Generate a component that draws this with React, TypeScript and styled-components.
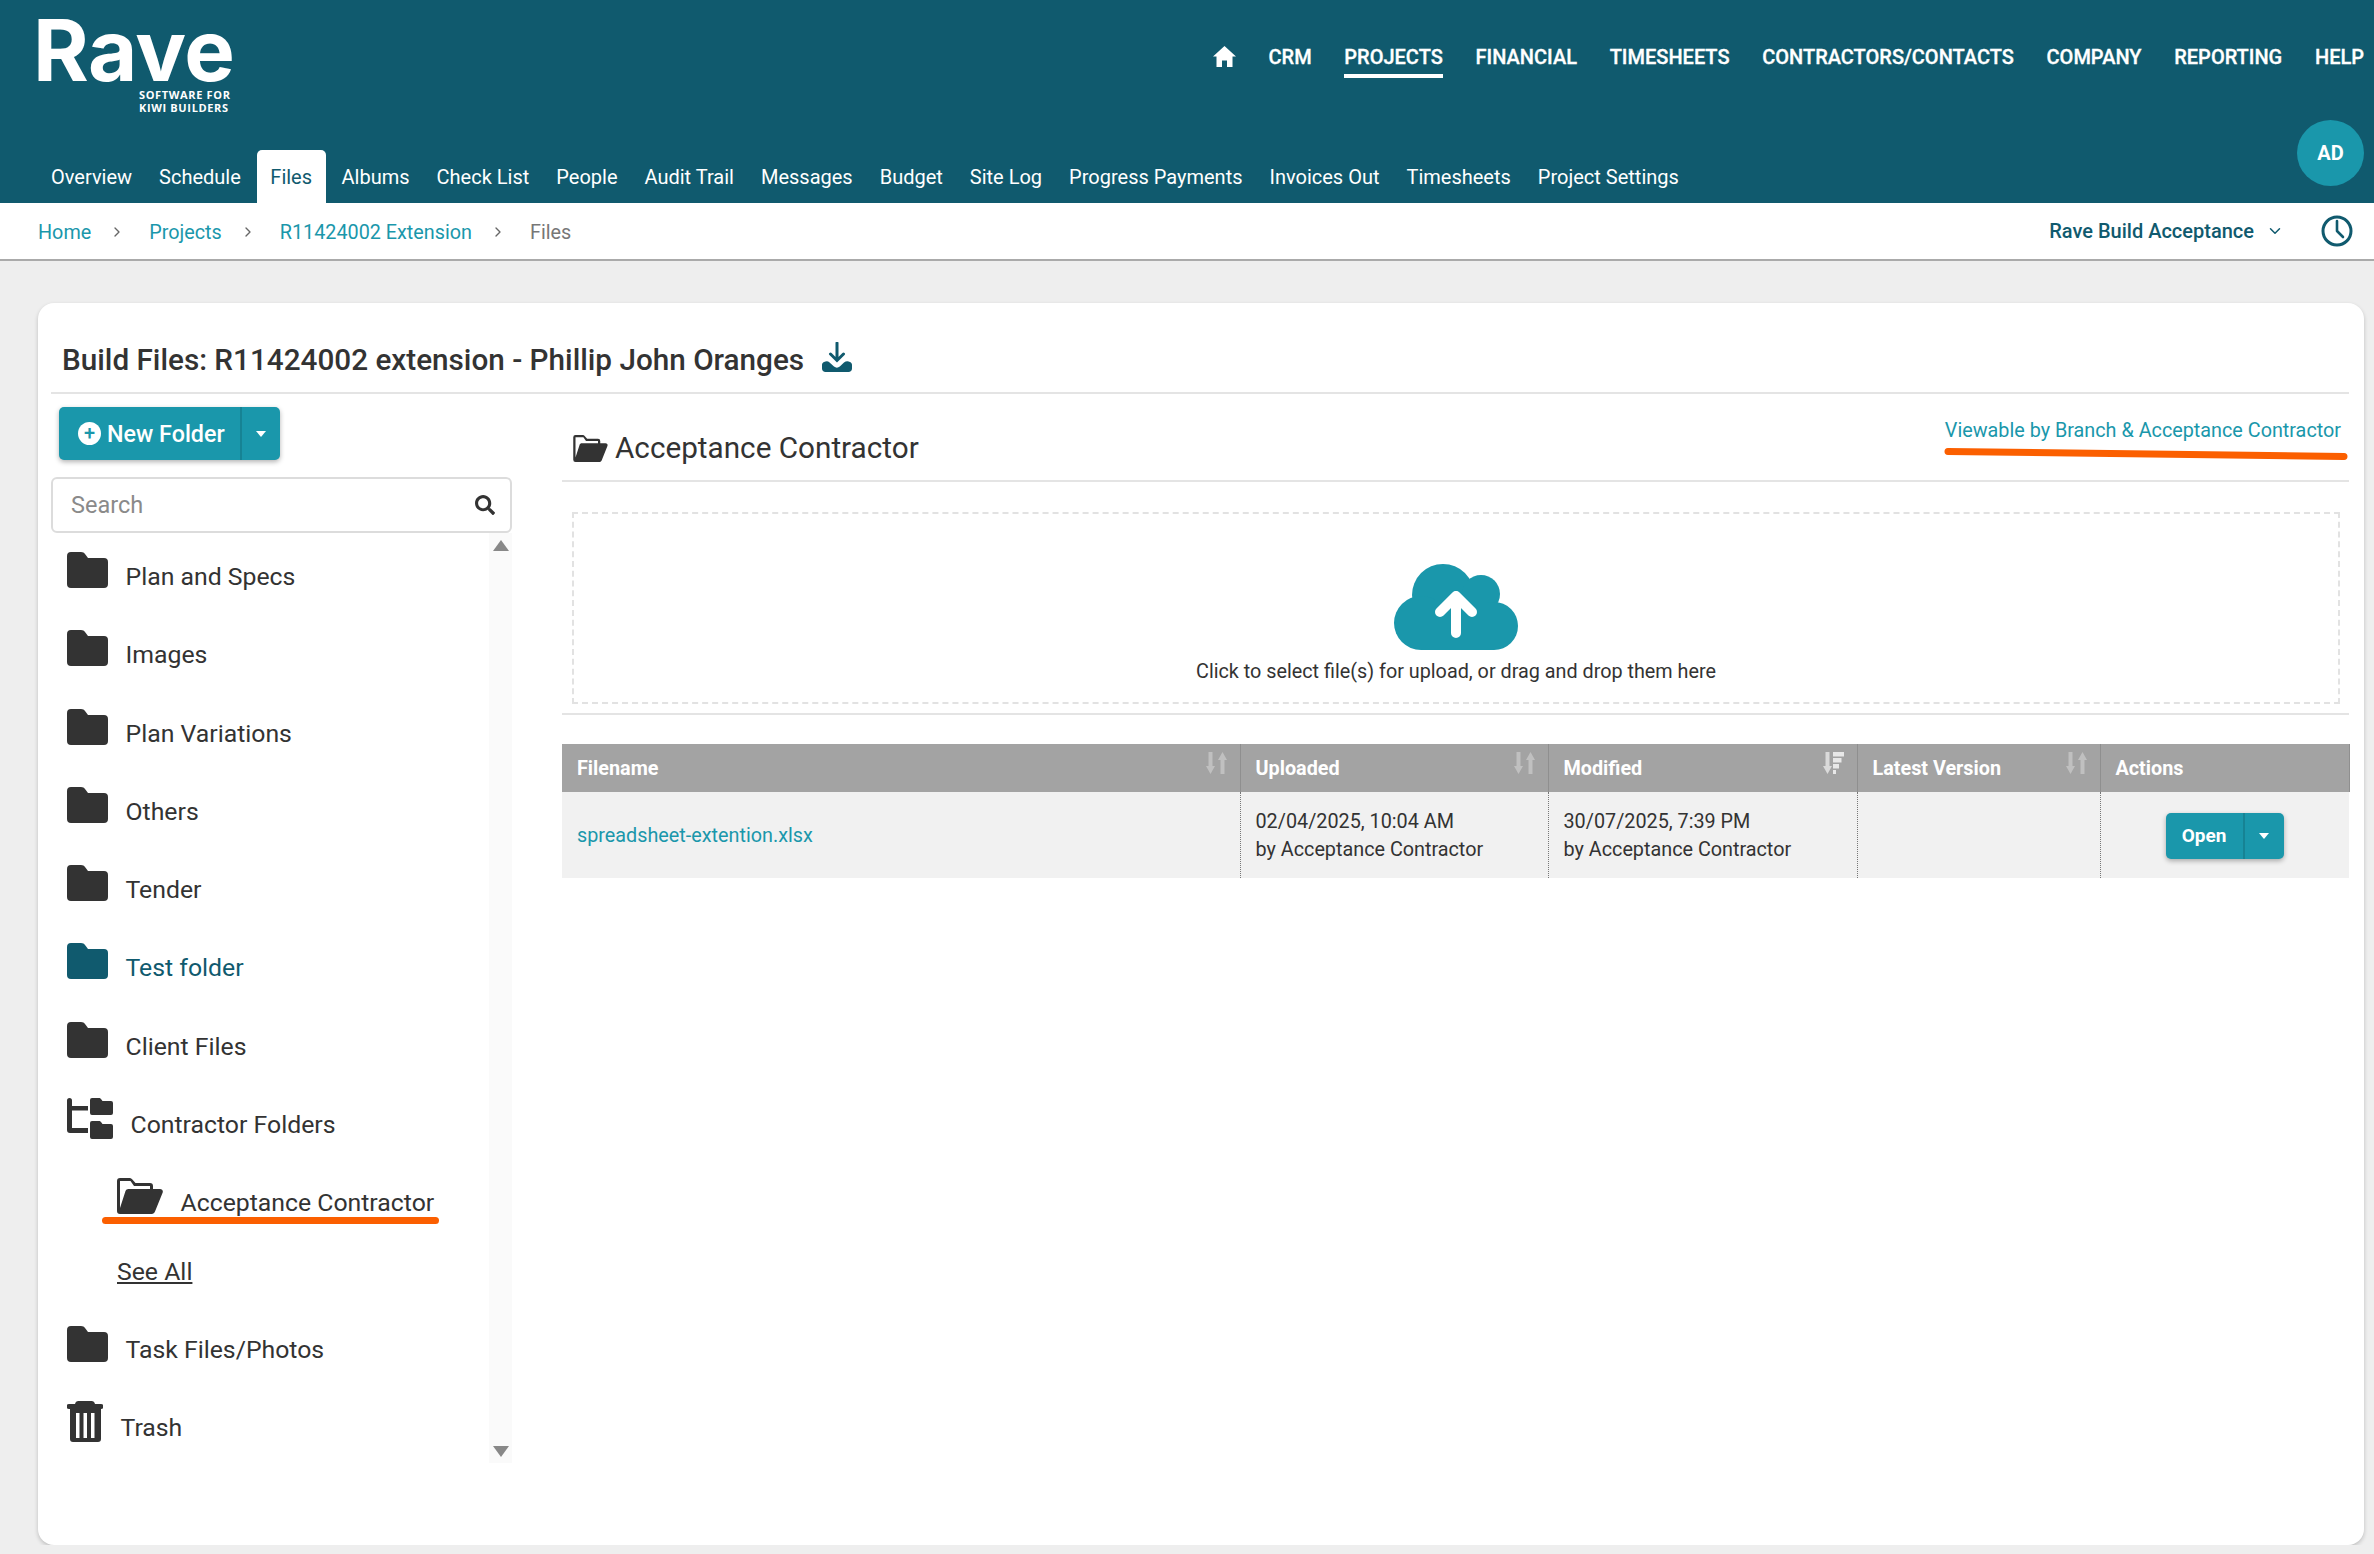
import styled, { createGlobalStyle } from "styled-components";
import { ChevronDown, ChevronRight } from "lucide-react";
import { FaSearch } from "react-icons/fa";

const TEAL_DARK = "#105a6e";
const TEAL = "#1a97ab";
const INK = "#333333";

const topNav = ["CRM", "PROJECTS", "FINANCIAL", "TIMESHEETS", "CONTRACTORS/CONTACTS", "COMPANY", "REPORTING", "HELP"];
const tabs = [
  "Overview",
  "Schedule",
  "Files",
  "Albums",
  "Check List",
  "People",
  "Audit Trail",
  "Messages",
  "Budget",
  "Site Log",
  "Progress Payments",
  "Invoices Out",
  "Timesheets",
  "Project Settings",
];
const folders = ["Plan and Specs", "Images", "Plan Variations", "Others", "Tender", "Test folder", "Client Files"];

const GlobalStyle = createGlobalStyle`
  html, body {
    margin: 0;
    padding: 0;
    background: #eeeeee;
    font-family: Roboto, "Liberation Sans", sans-serif;
    color: ${INK};
  }
  * { box-sizing: border-box; }
`;

const HomeIcon = () => (
  <svg width="23" height="21" viewBox="0 0 23 21">
    <path fill="#fff" d="M11.500 0L23 10.500h-3.500V21h-5.500v-6.500H9V21H3.500V10.500H0z" />
  </svg>
);

const FolderIcon = ({ color = INK }: { color?: string }) => (
  <svg width="41" height="36" viewBox="0 0 41 36">
    <path
      fill={color}
      d="M4 0h10c2 0 3 .7 4.400 2.400L21 6h16a4 4 0 0 1 4 4v22a4 4 0 0 1-4 4H4a4 4 0 0 1-4-4V4a4 4 0 0 1 4-4z"
    />
  </svg>
);

const OpenFolderIcon = ({ width, height }: { width: number; height: number }) => (
  <svg width={width} height={height} viewBox="0 0 46 36">
    <path
      fill={INK}
      d="M3 0h9c1.600 0 2.600.6 3.800 2L18.500 5H33a3 3 0 0 1 3 3v3h-3V8H17L13.500 3H3v27l5.500-17c.5-1.300 1.500-2 3-2H43c2 0 3.300 1.600 2.700 3.400L38 33.600c-.6 1.500-1.700 2.400-3.300 2.400H3a3 3 0 0 1-3-3V3a3 3 0 0 1 3-3z"
    />
  </svg>
);

const TreeIcon = () => (
  <svg width="46" height="41" viewBox="0 0 46 41">
    <path fill={INK} d="M0 2.500a2.500 2.500 0 0 1 5 0V8h16v4.500H5V30h16v5H3a3 3 0 0 1-3-3z" />
    <path fill={INK} d="M25 0h7c1 0 1.500.4 2.200 1.300L35.500 3H44a2 2 0 0 1 2 2v10a2 2 0 0 1-2 2H25a2 2 0 0 1-2-2V2a2 2 0 0 1 2-2z" />
    <path fill={INK} d="M25 23h7c1 0 1.500.4 2.200 1.300L35.500 26H44a2 2 0 0 1 2 2v11a2 2 0 0 1-2 2H25a2 2 0 0 1-2-2V25a2 2 0 0 1 2-2z" />
  </svg>
);

const TrashIcon = () => (
  <svg width="36" height="41" viewBox="0 0 36 41">
    <path fill={INK} d="M8 3c.5-2 1.500-3 3.500-3h13c2 0 3 1 3.500 3h6a2.500 2.500 0 0 1 0 5H2a2.500 2.500 0 0 1 0-5z" />
    <path
      fill={INK}
      fillRule="evenodd"
      d="M3 8h31v30a3 3 0 0 1-3 3H6a3 3 0 0 1-3-3zM9 12v25h3.500V12zM16.500 12v25H20V12zM24 12v25h3.500V12z"
    />
  </svg>
);

const SortIcon = () => (
  <svg width="21" height="22" viewBox="0 0 21 22">
    <path fill="rgba(255,255,255,0.32)" d="M2.500 0h4v14h2.500l-4.500 8L0 14h2.500zM14.500 22h4V8H21l-4.500-8L12 8h2.500z" />
  </svg>
);

const SortedIcon = () => (
  <svg width="21" height="22" viewBox="0 0 21 22">
    <path fill="rgba(255,255,255,0.6)" d="M2.500 0h4v14h2.500l-4.500 8L0 14h2.500z" />
    <path fill="rgba(255,255,255,0.75)" d="M10 0h11v4.500H10zM10 6h8.500v4.500H10zM10 12h6v4.500h-6zM10 18h3v4h-3z" />
  </svg>
);

const ClockIcon = () => (
  <svg width="34" height="32" viewBox="0 0 34 32">
    <circle cx="17" cy="16" r="14" fill="none" stroke={TEAL_DARK} strokeWidth="3" />
    <path d="M17 6v10l6 6" fill="none" stroke={TEAL_DARK} strokeWidth="2.600" strokeLinecap="round" strokeLinejoin="round" />
  </svg>
);

const DownloadIcon = () => (
  <svg width="30" height="30" viewBox="0 0 30 30">
    <path d="M15 1v17M8.500 12l6.500 6.500 6.500-6.500" fill="none" stroke={TEAL_DARK} strokeWidth="3" strokeLinecap="round" />
    <path
      fill={TEAL_DARK}
      d="M2 20c2-1 4-1 5 0l5 4.500c1.800 1.500 4 1.500 5.800 0L22 20.500c2-1.500 4-1.500 6-.5 1.300.6 2 1.600 2 3v3.500c0 2-1.500 3.500-3.500 3.500h-23C1.500 30 0 28.500 0 26.500V23c0-1.400.7-2.400 2-3z"
    />
  </svg>
);

const CloudIcon = () => (
  <svg width="124" height="87" viewBox="0 0 124 87">
    <g fill={TEAL}>
      <circle cx="49" cy="32" r="31" />
      <circle cx="87" cy="31" r="19" />
      <circle cx="27" cy="60" r="27" />
      <circle cx="100" cy="63" r="24" />
      <rect x="27" y="40" width="73" height="47" />
    </g>
    <path d="M62 70V33M46 49l16-16 16 16" fill="none" stroke="#fff" strokeWidth="10" strokeLinecap="round" strokeLinejoin="round" />
  </svg>
);

const Caret = styled.span`
  width: 0;
  height: 0;
  border-left: 5.5px solid transparent;
  border-right: 5.5px solid transparent;
  border-top: 6px solid #fff;
`;

const CrumbChevron = styled(ChevronRight)`
  margin: 0 3px 0 -3px;
  color: #666666;
`;

export default function App() {
  return (
    <>
      <GlobalStyle />
      <Header>
        <TopRow>
          <Logo>
            <LogoWord>Rave</LogoWord>
            <LogoTag>
              SOFTWARE FOR
              <br />
              KIWI BUILDERS
            </LogoTag>
          </Logo>
          <TopNav>
            <HomeLink>
              <HomeIcon />
            </HomeLink>
            {topNav.map((item) => (
              <TopLink key={item} $active={item === "PROJECTS"}>
                {item}
              </TopLink>
            ))}
          </TopNav>
        </TopRow>
        <TabRow>
          <Tabs>
            {tabs.map((tab) => (
              <Tab key={tab} $active={tab === "Files"}>
                {tab}
              </Tab>
            ))}
          </Tabs>
          <Avatar>AD</Avatar>
        </TabRow>
      </Header>

      <Breadcrumbs>
        <Crumbs>
          <CrumbLink>Home</CrumbLink>
          <CrumbChevron size={16} />
          <CrumbLink>Projects</CrumbLink>
          <CrumbChevron size={16} />
          <CrumbLink>R11424002 Extension</CrumbLink>
          <CrumbChevron size={16} />
          <CrumbCurrent>Files</CrumbCurrent>
        </Crumbs>
        <AccountArea>
          <AccountName>
            Rave Build Acceptance
            <ChevronDown size={18} color={TEAL_DARK} />
          </AccountName>
          <ClockIcon />
        </AccountArea>
      </Breadcrumbs>

      <Card>
        <TitleRow>
          <Title>Build Files: R11424002 extension - Phillip John Oranges</Title>
          <DownloadIcon />
        </TitleRow>
        <Columns>
          <Sidebar>
            <NewFolderButton>
              <NewFolderMain>
                <PlusCircle>+</PlusCircle>
                New Folder
              </NewFolderMain>
              <NewFolderCaret>
                <Caret />
              </NewFolderCaret>
            </NewFolderButton>
            <SearchBox>
              <SearchInput placeholder="Search" />
              <FaSearch size={20} color={INK} />
            </SearchBox>
            <TreeWrap>
              <FolderList>
                {folders.map((name) => {
                  const active = name === "Test folder";
                  return (
                    <FolderRow key={name}>
                      <IconSlot $top={5}>
                        <FolderIcon color={active ? TEAL_DARK : INK} />
                      </IconSlot>
                      <FolderLabel $active={active}>{name}</FolderLabel>
                    </FolderRow>
                  );
                })}
                <FolderRow>
                  <IconSlot $top={3}>
                    <TreeIcon />
                  </IconSlot>
                  <FolderLabel>Contractor Folders</FolderLabel>
                </FolderRow>
                <FolderRow $nested>
                  <IconSlot $top={5}>
                    <OpenFolderIcon width={46} height={36} />
                  </IconSlot>
                  <FolderLabel>Acceptance Contractor</FolderLabel>
                  <TreeMark />
                </FolderRow>
                <SeeAllRow>
                  <SeeAll>See All</SeeAll>
                </SeeAllRow>
                <FolderRow>
                  <IconSlot $top={6}>
                    <FolderIcon />
                  </IconSlot>
                  <FolderLabel>Task Files/Photos</FolderLabel>
                </FolderRow>
                <FolderRow>
                  <IconSlot $top={3}>
                    <TrashIcon />
                  </IconSlot>
                  <FolderLabel>Trash</FolderLabel>
                </FolderRow>
              </FolderList>
              <ScrollTrack>
                <ScrollArrow $up />
                <ScrollArrow />
              </ScrollTrack>
            </TreeWrap>
          </Sidebar>

          <Main>
            <MainHead>
              <MainTitle>
                <OpenFolderIcon width={35} height={27} />
                <span>Acceptance Contractor</span>
              </MainTitle>
              <ViewableLink>Viewable by Branch &amp; Acceptance Contractor</ViewableLink>
              <LinkMark width="404" height="12" viewBox="0 0 404 12">
                <path d="M4 3.500L400 8.500" stroke="#fb5f00" strokeWidth="7" strokeLinecap="round" />
              </LinkMark>
            </MainHead>
            <DropZone>
              <CloudIcon />
              <DropText>Click to select file(s) for upload, or drag and drop them here</DropText>
            </DropZone>
            <Rule />
            <FilesTable>
              <colgroup>
                <col style={{ width: 678 }} />
                <col style={{ width: 308 }} />
                <col style={{ width: 309 }} />
                <col style={{ width: 243 }} />
                <col style={{ width: 249 }} />
              </colgroup>
              <thead>
                <tr>
                  <HeadCell>
                    Filename
                    <SortSlot>
                      <SortIcon />
                    </SortSlot>
                  </HeadCell>
                  <HeadCell>
                    Uploaded
                    <SortSlot>
                      <SortIcon />
                    </SortSlot>
                  </HeadCell>
                  <HeadCell>
                    Modified
                    <SortSlot>
                      <SortedIcon />
                    </SortSlot>
                  </HeadCell>
                  <HeadCell>
                    Latest Version
                    <SortSlot>
                      <SortIcon />
                    </SortSlot>
                  </HeadCell>
                  <HeadCell>Actions</HeadCell>
                </tr>
              </thead>
              <tbody>
                <tr>
                  <BodyCell>
                    <FileLink>spreadsheet-extention.xlsx</FileLink>
                  </BodyCell>
                  <BodyCell>
                    02/04/2025, 10:04 AM
                    <br />
                    by Acceptance Contractor
                  </BodyCell>
                  <BodyCell>
                    30/07/2025, 7:39 PM
                    <br />
                    by Acceptance Contractor
                  </BodyCell>
                  <BodyCell />
                  <BodyCell>
                    <OpenButton>
                      <OpenMain>Open</OpenMain>
                      <OpenCaret>
                        <Caret />
                      </OpenCaret>
                    </OpenButton>
                  </BodyCell>
                </tr>
              </tbody>
            </FilesTable>
          </Main>
        </Columns>
      </Card>
    </>
  );
}

const Header = styled.header`
  height: 203px;
  background: ${TEAL_DARK};
  color: #fff;
  display: flex;
  flex-direction: column;
`;

const TopRow = styled.div`
  height: 120px;
  display: flex;
  justify-content: space-between;
  padding: 0 10px 0 33px;
`;

const Logo = styled.div`
  display: flex;
  flex-direction: column;
  width: 204px;
  padding-top: 7px;
`;

const LogoWord = styled.div`
  font-family: Inter, "Open Sans", sans-serif;
  font-weight: 700;
  font-size: 85px;
  line-height: 88px;
  letter-spacing: -0.5px;
`;

const LogoTag = styled.div`
  align-self: flex-end;
  width: 94px;
  margin: -7px 4px 0 0;
  font-family: "Open Sans", sans-serif;
  font-weight: 700;
  font-size: 11px;
  line-height: 13px;
  letter-spacing: 0.65px;
  white-space: nowrap;
`;

const TopNav = styled.nav`
  display: flex;
  align-items: flex-start;
  gap: 32.7px;
  padding-top: 44px;
`;

const HomeLink = styled.span`
  display: flex;
  padding-top: 2px;
`;

const TopLink = styled.a<{ $active?: boolean }>`
  font-size: 20px;
  font-weight: 500;
  line-height: 26px;
  height: 34px;
  border-bottom: 4px solid ${(p) => (p.$active ? "#fff" : "transparent")};
  -webkit-text-stroke: 0.3px #fff;
`;

const TabRow = styled.div`
  flex: 1;
  display: flex;
  justify-content: space-between;
  align-items: flex-end;
  padding: 0 10px 0 37.5px;
`;

const Tabs = styled.div`
  display: flex;
`;

const Tab = styled.a<{ $active?: boolean }>`
  height: 53px;
  padding: 0 13.5px;
  display: flex;
  align-items: center;
  font-size: 20px;
  border-radius: 5px 5px 0 0;
  background: ${(p) => (p.$active ? "#fff" : "transparent")};
  color: ${(p) => (p.$active ? TEAL_DARK : "#fff")};
  margin: 6px ${(p) => (p.$active ? "2.5px" : "0")} 0;
`;

const Avatar = styled.div`
  width: 67px;
  height: 66px;
  margin-bottom: 17px;
  border-radius: 50%;
  background: ${TEAL};
  display: flex;
  align-items: center;
  justify-content: center;
  font-size: 20px;
  font-weight: 700;
`;

const Breadcrumbs = styled.div`
  height: 58px;
  background: #fff;
  border-bottom: 2px solid #aaaaaa;
  display: flex;
  justify-content: space-between;
  align-items: center;
  padding: 0 20px 0 38px;
`;

const Crumbs = styled.div`
  display: flex;
  align-items: center;
  gap: 21px;
  margin-top: 2px;
  font-size: 19.8px;
`;

const CrumbLink = styled.a`
  color: ${TEAL};
`;

const CrumbCurrent = styled.span`
  color: #777777;
`;

const AccountArea = styled.div`
  display: flex;
  align-items: center;
  gap: 36px;
`;

const AccountName = styled.div`
  display: flex;
  align-items: center;
  gap: 12px;
  font-size: 20px;
  font-weight: 500;
  color: ${TEAL_DARK};
`;

const Card = styled.main`
  width: 2326px;
  height: 1242px;
  margin: 42px 0 0 38px;
  padding: 0 15px 0 13px;
  background: #fff;
  border-radius: 16px;
  box-shadow: 0 2px 4px rgba(0, 0, 0, 0.2);
`;

const TitleRow = styled.div`
  height: 91px;
  padding: 39px 0 0 11px;
  display: flex;
  align-items: flex-start;
  gap: 18px;
  border-bottom: 2px solid #e4e4e4;
`;

const Title = styled.h1`
  margin: 0;
  font-size: 29.7px;
  font-weight: 500;
  line-height: 36px;
  color: ${INK};
`;

const Columns = styled.div`
  display: flex;
  gap: 50px;
`;

const Sidebar = styled.aside`
  width: 461px;
  padding-top: 13px;
`;

const NewFolderButton = styled.div`
  margin-left: 8px;
  width: 221px;
  height: 53px;
  display: flex;
  border-radius: 5px;
  background: ${TEAL};
  color: #fff;
  box-shadow: 0 2px 5px rgba(0, 0, 0, 0.3);
`;

const NewFolderMain = styled.div`
  width: 183px;
  display: flex;
  align-items: center;
  gap: 6px;
  padding-left: 19px;
  font-size: 23.3px;
  font-weight: 500;
  border-right: 2px solid #168394;
`;

const PlusCircle = styled.span`
  width: 23px;
  height: 23px;
  border-radius: 50%;
  background: #fff;
  color: ${TEAL};
  font-size: 20px;
  line-height: 22px;
  text-align: center;
`;

const NewFolderCaret = styled.div`
  flex: 1;
  display: flex;
  align-items: center;
  justify-content: center;
`;

const SearchBox = styled.div`
  margin-top: 17px;
  height: 56px;
  display: flex;
  align-items: center;
  padding: 0 15px 0 16px;
  border: 2px solid #dcdcdc;
  border-radius: 6px;
`;

const SearchInput = styled.input`
  flex: 1;
  min-width: 0;
  border: none;
  outline: none;
  font-family: inherit;
  font-size: 23.5px;
  color: ${INK};
  &::placeholder {
    color: #8a8a8a;
  }
`;

const TreeWrap = styled.div`
  display: flex;
  height: 930px;
`;

const FolderList = styled.div`
  flex: 1;
  padding-top: 14px;
`;

const FolderRow = styled.div<{ $nested?: boolean }>`
  position: relative;
  height: 78.3px;
  display: flex;
  align-items: flex-start;
  gap: 17.5px;
  padding-left: ${(p) => (p.$nested ? "66px" : "16px")};
`;

const IconSlot = styled.span<{ $top: number }>`
  display: flex;
  margin-top: ${(p) => p.$top}px;
`;

const FolderLabel = styled.span<{ $active?: boolean }>`
  margin-top: 16px;
  font-size: 24.8px;
  line-height: 28px;
  color: ${(p) => (p.$active ? TEAL_DARK : INK)};
`;

const TreeMark = styled.span`
  position: absolute;
  left: 51px;
  top: 44px;
  width: 337px;
  height: 7px;
  border-radius: 4px;
  background: #fb5f00;
`;

const SeeAllRow = styled.div`
  height: 68px;
  padding: 6px 0 0 66px;
`;

const SeeAll = styled.a`
  font-size: 24.8px;
  line-height: 28px;
  text-decoration: underline;
  color: ${INK};
`;

const ScrollTrack = styled.div`
  width: 23px;
  background: #fafafa;
  display: flex;
  flex-direction: column;
  justify-content: space-between;
  align-items: center;
  padding: 7px 0 6px;
`;

const ScrollArrow = styled.span<{ $up?: boolean }>`
  width: 0;
  height: 0;
  border-left: 8px solid transparent;
  border-right: 8px solid transparent;
  ${(p) => (p.$up ? "border-bottom: 11px solid #888;" : "border-top: 11px solid #888;")}
`;

const Main = styled.section`
  width: 1787px;
`;

const MainHead = styled.div`
  position: relative;
  height: 88px;
  display: flex;
  justify-content: space-between;
  align-items: flex-start;
  padding: 0 8px 0 11px;
  border-bottom: 2px solid #e4e4e4;
`;

const MainTitle = styled.h2`
  margin: 37px 0 0;
  display: flex;
  align-items: center;
  gap: 7px;
  font-size: 29.7px;
  font-weight: 400;
  line-height: 34px;
  color: ${INK};
`;

const ViewableLink = styled.a`
  margin-top: 24px;
  font-size: 19.8px;
  line-height: 26px;
  color: ${TEAL};
`;

const LinkMark = styled.svg`
  position: absolute;
  right: 1px;
  top: 54px;
`;

const DropZone = styled.div`
  margin: 30px 9px 0 10px;
  height: 192px;
  border: 2px dashed #e2e2e2;
  display: flex;
  flex-direction: column;
  align-items: center;
  padding-top: 49px;
`;

const DropText = styled.div`
  margin-top: 9px;
  font-size: 19.8px;
  line-height: 26px;
  color: ${INK};
`;

const Rule = styled.div`
  margin-top: 9px;
  height: 2px;
  background: #e4e4e4;
`;

const FilesTable = styled.table`
  margin-top: 29px;
  width: 1787px;
  table-layout: fixed;
  border-collapse: collapse;
`;

const HeadCell = styled.th`
  position: relative;
  height: 48px;
  padding: 0 15px;
  text-align: left;
  font-size: 19.8px;
  font-weight: 700;
  color: #fff;
  background: #a3a3a3;
  border-right: 1px solid #8f8f8f;
`;

const SortSlot = styled.span`
  position: absolute;
  right: 13px;
  top: 8px;
  display: flex;
`;

const BodyCell = styled.td`
  height: 86px;
  padding: 2px 15px 0;
  font-size: 19.8px;
  line-height: 27.6px;
  background: #f1f1f1;
  color: ${INK};
  border-right: 1px dotted #777;
  &:last-child {
    border-right: none;
  }
`;

const FileLink = styled.a`
  color: ${TEAL};
`;

const OpenButton = styled.div`
  margin-left: 50px;
  width: 118px;
  height: 46px;
  display: flex;
  border-radius: 5px;
  background: ${TEAL};
  color: #fff;
  box-shadow: 0 2px 5px rgba(0, 0, 0, 0.3);
`;

const OpenMain = styled.div`
  width: 79px;
  display: flex;
  align-items: center;
  justify-content: center;
  font-size: 19px;
  font-weight: 700;
  border-right: 2px solid #168394;
`;

const OpenCaret = styled.div`
  flex: 1;
  display: flex;
  align-items: center;
  justify-content: center;
`;
